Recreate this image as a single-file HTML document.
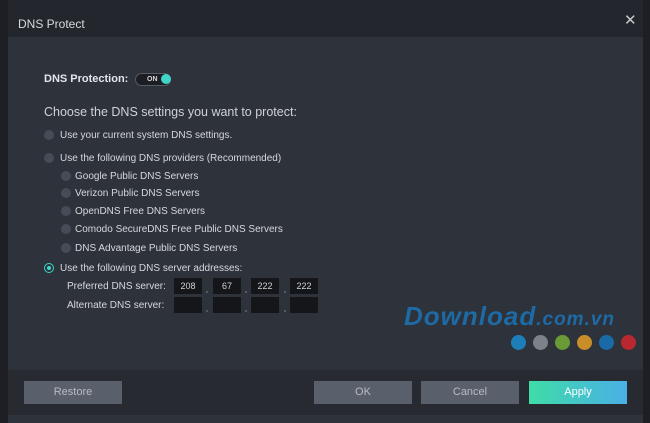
<!DOCTYPE html><html><head><style>
body{margin:0;width:650px;height:423px;background:#1d1f24;font-family:"Liberation Sans",sans-serif;position:relative;overflow:hidden}
.d{position:absolute;left:8px;top:0;width:635px;height:423px;background:#2e323b}
.t{position:absolute;left:0;top:0;width:635px;height:37px;background:#23262c;color:#d8dadf;font-size:12px}
.a{position:absolute;font-size:10px;color:#d6d8dc;white-space:nowrap}
.r{position:absolute;width:10px;height:10px;border-radius:50%;background:#464b55}
.b{position:absolute;width:28px;height:16px;background:#14161a;color:#d0d2d6;font-size:9px;line-height:16px;text-align:center}
.btn{position:absolute;top:381px;width:98px;height:23px;background:#5a5f6c;color:#b8bbc2;font-size:11px;line-height:23px;text-align:center}
.dot{position:absolute;top:335px;width:15px;height:15px;border-radius:50%}
.p{position:absolute;width:2px;height:2px;background:#555a64}
</style></head><body>
<div class="d">
<div class="t"><span style="position:absolute;left:10px;top:17px">DNS Protect</span><span style="position:absolute;left:616px;top:11px;font-size:15px;color:#c8cad0">✕</span></div>
<div style="position:absolute;left:0;top:370px;width:635px;height:45px;background:#272a31"></div>
</div>
<div class="a" style="left:44px;top:73px;font-size:11px;font-weight:bold;color:#e4e6ea">DNS Protection:</div>
<div style="position:absolute;left:135px;top:73px;width:34px;height:11px;border:1px solid #555a64;border-radius:7px;background:#1c1e23"></div>
<div class="a" style="left:147px;top:76px;font-size:7px;font-weight:bold">ON</div>
<div style="position:absolute;left:161px;top:74px;width:10px;height:10px;border-radius:50%;background:#3fd6c8"></div>
<div class="a" style="left:44px;top:105px;font-size:12.5px;color:#cfd2d7">Choose the DNS settings you want to protect:</div>
<div class="r" style="left:44px;top:130px"></div><div class="a" style="left:60px;top:130px">Use your current system DNS settings.</div>
<div class="r" style="left:44px;top:153px"></div><div class="a" style="left:60px;top:153px">Use the following DNS providers (Recommended)</div>
<div class="r" style="left:61px;top:171px"></div><div class="a" style="left:75px;top:171px">Google Public DNS Servers</div>
<div class="r" style="left:61px;top:188px"></div><div class="a" style="left:75px;top:188px">Verizon Public DNS Servers</div>
<div class="r" style="left:61px;top:206px"></div><div class="a" style="left:75px;top:206px">OpenDNS Free DNS Servers</div>
<div class="r" style="left:61px;top:224px"></div><div class="a" style="left:75px;top:224px">Comodo SecureDNS Free Public DNS Servers</div>
<div class="r" style="left:61px;top:243px"></div><div class="a" style="left:75px;top:243px">DNS Advantage Public DNS Servers</div>
<div class="r" style="left:44px;top:263px;width:8px;height:8px;background:#2e323b;border:1px solid #3fd6c8"></div>
<div style="position:absolute;left:47px;top:266px;width:4px;height:4px;border-radius:50%;background:#3fd6c8"></div>
<div class="a" style="left:60px;top:263px">Use the following DNS server addresses:</div>
<div class="a" style="left:67px;top:281px">Preferred DNS server:</div>
<div class="a" style="left:67px;top:300px">Alternate DNS server:</div>
<div class="b" style="left:174px;top:278px">208</div><div class="b" style="left:213px;top:278px">67</div><div class="b" style="left:251px;top:278px">222</div><div class="b" style="left:290px;top:278px">222</div>
<div class="b" style="left:174px;top:297px"></div><div class="b" style="left:213px;top:297px"></div><div class="b" style="left:251px;top:297px"></div><div class="b" style="left:290px;top:297px"></div>
<div class="p" style="left:206px;top:291px"></div><div class="p" style="left:245px;top:291px"></div><div class="p" style="left:284px;top:291px"></div>
<div class="p" style="left:206px;top:310px"></div><div class="p" style="left:245px;top:310px"></div><div class="p" style="left:284px;top:310px"></div>
<div class="a" style="left:404px;top:301px;font-size:26px;font-weight:bold;font-style:italic;color:#1d6aa5;letter-spacing:1px">Download<span style="font-size:19px">.com.vn</span></div>
<div class="dot" style="left:511px;background:#1e7fb8"></div><div class="dot" style="left:533px;background:#7d8188"></div><div class="dot" style="left:555px;background:#6a9a36"></div><div class="dot" style="left:577px;background:#c98d2a"></div><div class="dot" style="left:599px;background:#1a6aa8"></div><div class="dot" style="left:621px;background:#b9282f"></div>
<div class="btn" style="left:24px">Restore</div>
<div class="btn" style="left:314px">OK</div>
<div class="btn" style="left:421px">Cancel</div>
<div class="btn" style="left:529px;background:linear-gradient(90deg,#3fdca8,#4ab0e6);color:#fff">Apply</div>
</body></html>
